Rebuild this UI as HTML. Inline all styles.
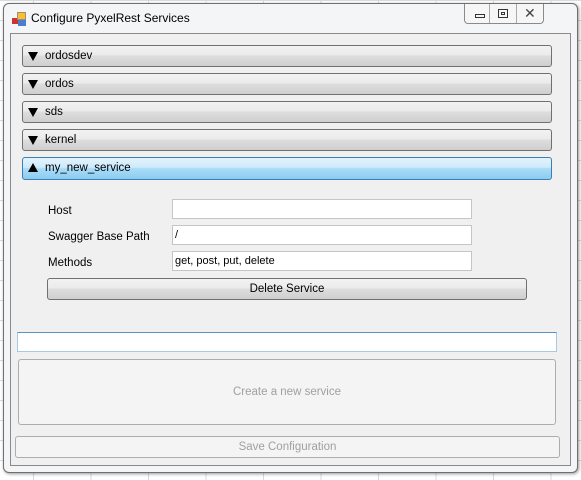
<!DOCTYPE html><html><head><style>
body{margin:0;width:581px;height:480px;background:#fff;font-family:"Liberation Sans",sans-serif;font-size:12px;position:relative;overflow:hidden;
background-image:linear-gradient(#dadada 1px,transparent 1px),linear-gradient(90deg,#dadada 1px,transparent 1px);background-size:57.5px 20px;background-position:0 0,33px 0}
.a{position:absolute;box-sizing:border-box}
.win{left:3px;top:3px;width:575px;height:470px;background:#f4f5f6;border:1px solid #6f6f6f;border-radius:6px;box-shadow:1px 1px 3px rgba(0,0,0,.4)}
.cl{left:10px;top:33px;width:561px;height:433px;background:#f0f0f0;border:1px solid #8a8a8a}
.h{left:22px;width:530px;height:22px;border:1px solid #707070;border-radius:3px;background:linear-gradient(#f2f2f2 0,#ebebeb 45%,#dddddd 50%,#cfcfcf 100%);padding-left:22px;line-height:20px;font-size:11.5px}
.h:before{content:"";position:absolute;left:5px;top:6px;border-left:5px solid transparent;border-right:5px solid transparent;border-top:9px solid #000}
.hb{background:linear-gradient(#e3f3fc 0,#cdeafb 45%,#a9dcf8 50%,#8ccbef 100%);border-color:#3c7fb1}
.hb:before{border-top:0;border-bottom:9px solid #000;top:5px}
.in{left:172px;width:300px;height:20px;background:#fff;border:1px solid #c5c5c5;font-size:11px;padding:2px 2px;line-height:14px}
.lb{left:48px;font-size:11.5px}
</style></head><body>
<div class="a win"></div>
<div class="a" style="left:12px;top:12px;width:16px;height:14px">
<div class="a" style="left:0;top:6px;width:6px;height:6px;background:#c33"></div>
<div class="a" style="left:5px;top:0;width:9px;height:8px;background:#f2c233;border:1px solid #a87"></div>
<div class="a" style="left:6px;top:8px;width:8px;height:6px;background:#4a7fd0"></div></div>
<div class="a" style="left:31px;top:11px;font-size:12px">Configure PyxelRest Services</div>
<div class="a" style="left:464px;top:4px;width:80px;height:20px;border:1px solid #8a8a8a;border-top:0;border-radius:0 0 4px 4px;background:#f6f6f6"></div>
<div class="a" style="left:489px;top:4px;width:1px;height:19px;background:#aaa"></div>
<div class="a" style="left:516px;top:4px;width:1px;height:19px;background:#aaa"></div>
<div class="a" style="left:475px;top:14px;width:10px;height:4px;border:1px solid #333"></div>
<div class="a" style="left:498px;top:9px;width:10px;height:9px;border:1px solid #333"><div class="a" style="left:2px;top:2px;width:4px;height:3px;border:1px solid #333"></div></div>
<div class="a" style="left:524px;top:5px;font-size:14px;color:#444">✕</div>
<div class="a cl"></div>
<div class="a h" style="top:45px">ordosdev</div>
<div class="a h" style="top:73px">ordos</div>
<div class="a h" style="top:101px">sds</div>
<div class="a h" style="top:129px">kernel</div>
<div class="a h hb" style="top:157px;height:23px">my_new_service</div>
<div class="a lb" style="top:205px">Host</div>
<div class="a lb" style="top:231px">Swagger Base Path</div>
<div class="a lb" style="top:257px">Methods</div>
<div class="a in" style="top:199px"></div>
<div class="a in" style="top:225px">/</div>
<div class="a in" style="top:251px">get, post, put, delete</div>
<div class="a" style="left:47px;top:278px;width:480px;height:22px;border:1px solid #707070;border-radius:3px;background:linear-gradient(#f2f2f2 0,#ebebeb 45%,#dddddd 50%,#cfcfcf 100%);text-align:center;line-height:20px;font-size:11.5px">Delete Service</div>
<div class="a" style="left:17px;top:332px;width:540px;height:20px;background:#fff;border:1px solid #a9c8e2;border-top-color:#5b93c5"></div>
<div class="a" style="left:18px;top:359px;width:538px;height:66px;background:#f4f4f4;border:1px solid #adadad;border-radius:3px;color:#a0a0a0;text-align:center;line-height:64px;font-size:11.5px">Create a new service</div>
<div class="a" style="left:15px;top:436px;width:545px;height:22px;background:#f4f4f4;border:1px solid #adadad;border-radius:3px;color:#a0a0a0;text-align:center;line-height:20px;font-size:11.5px">Save Configuration</div>
</body></html>
